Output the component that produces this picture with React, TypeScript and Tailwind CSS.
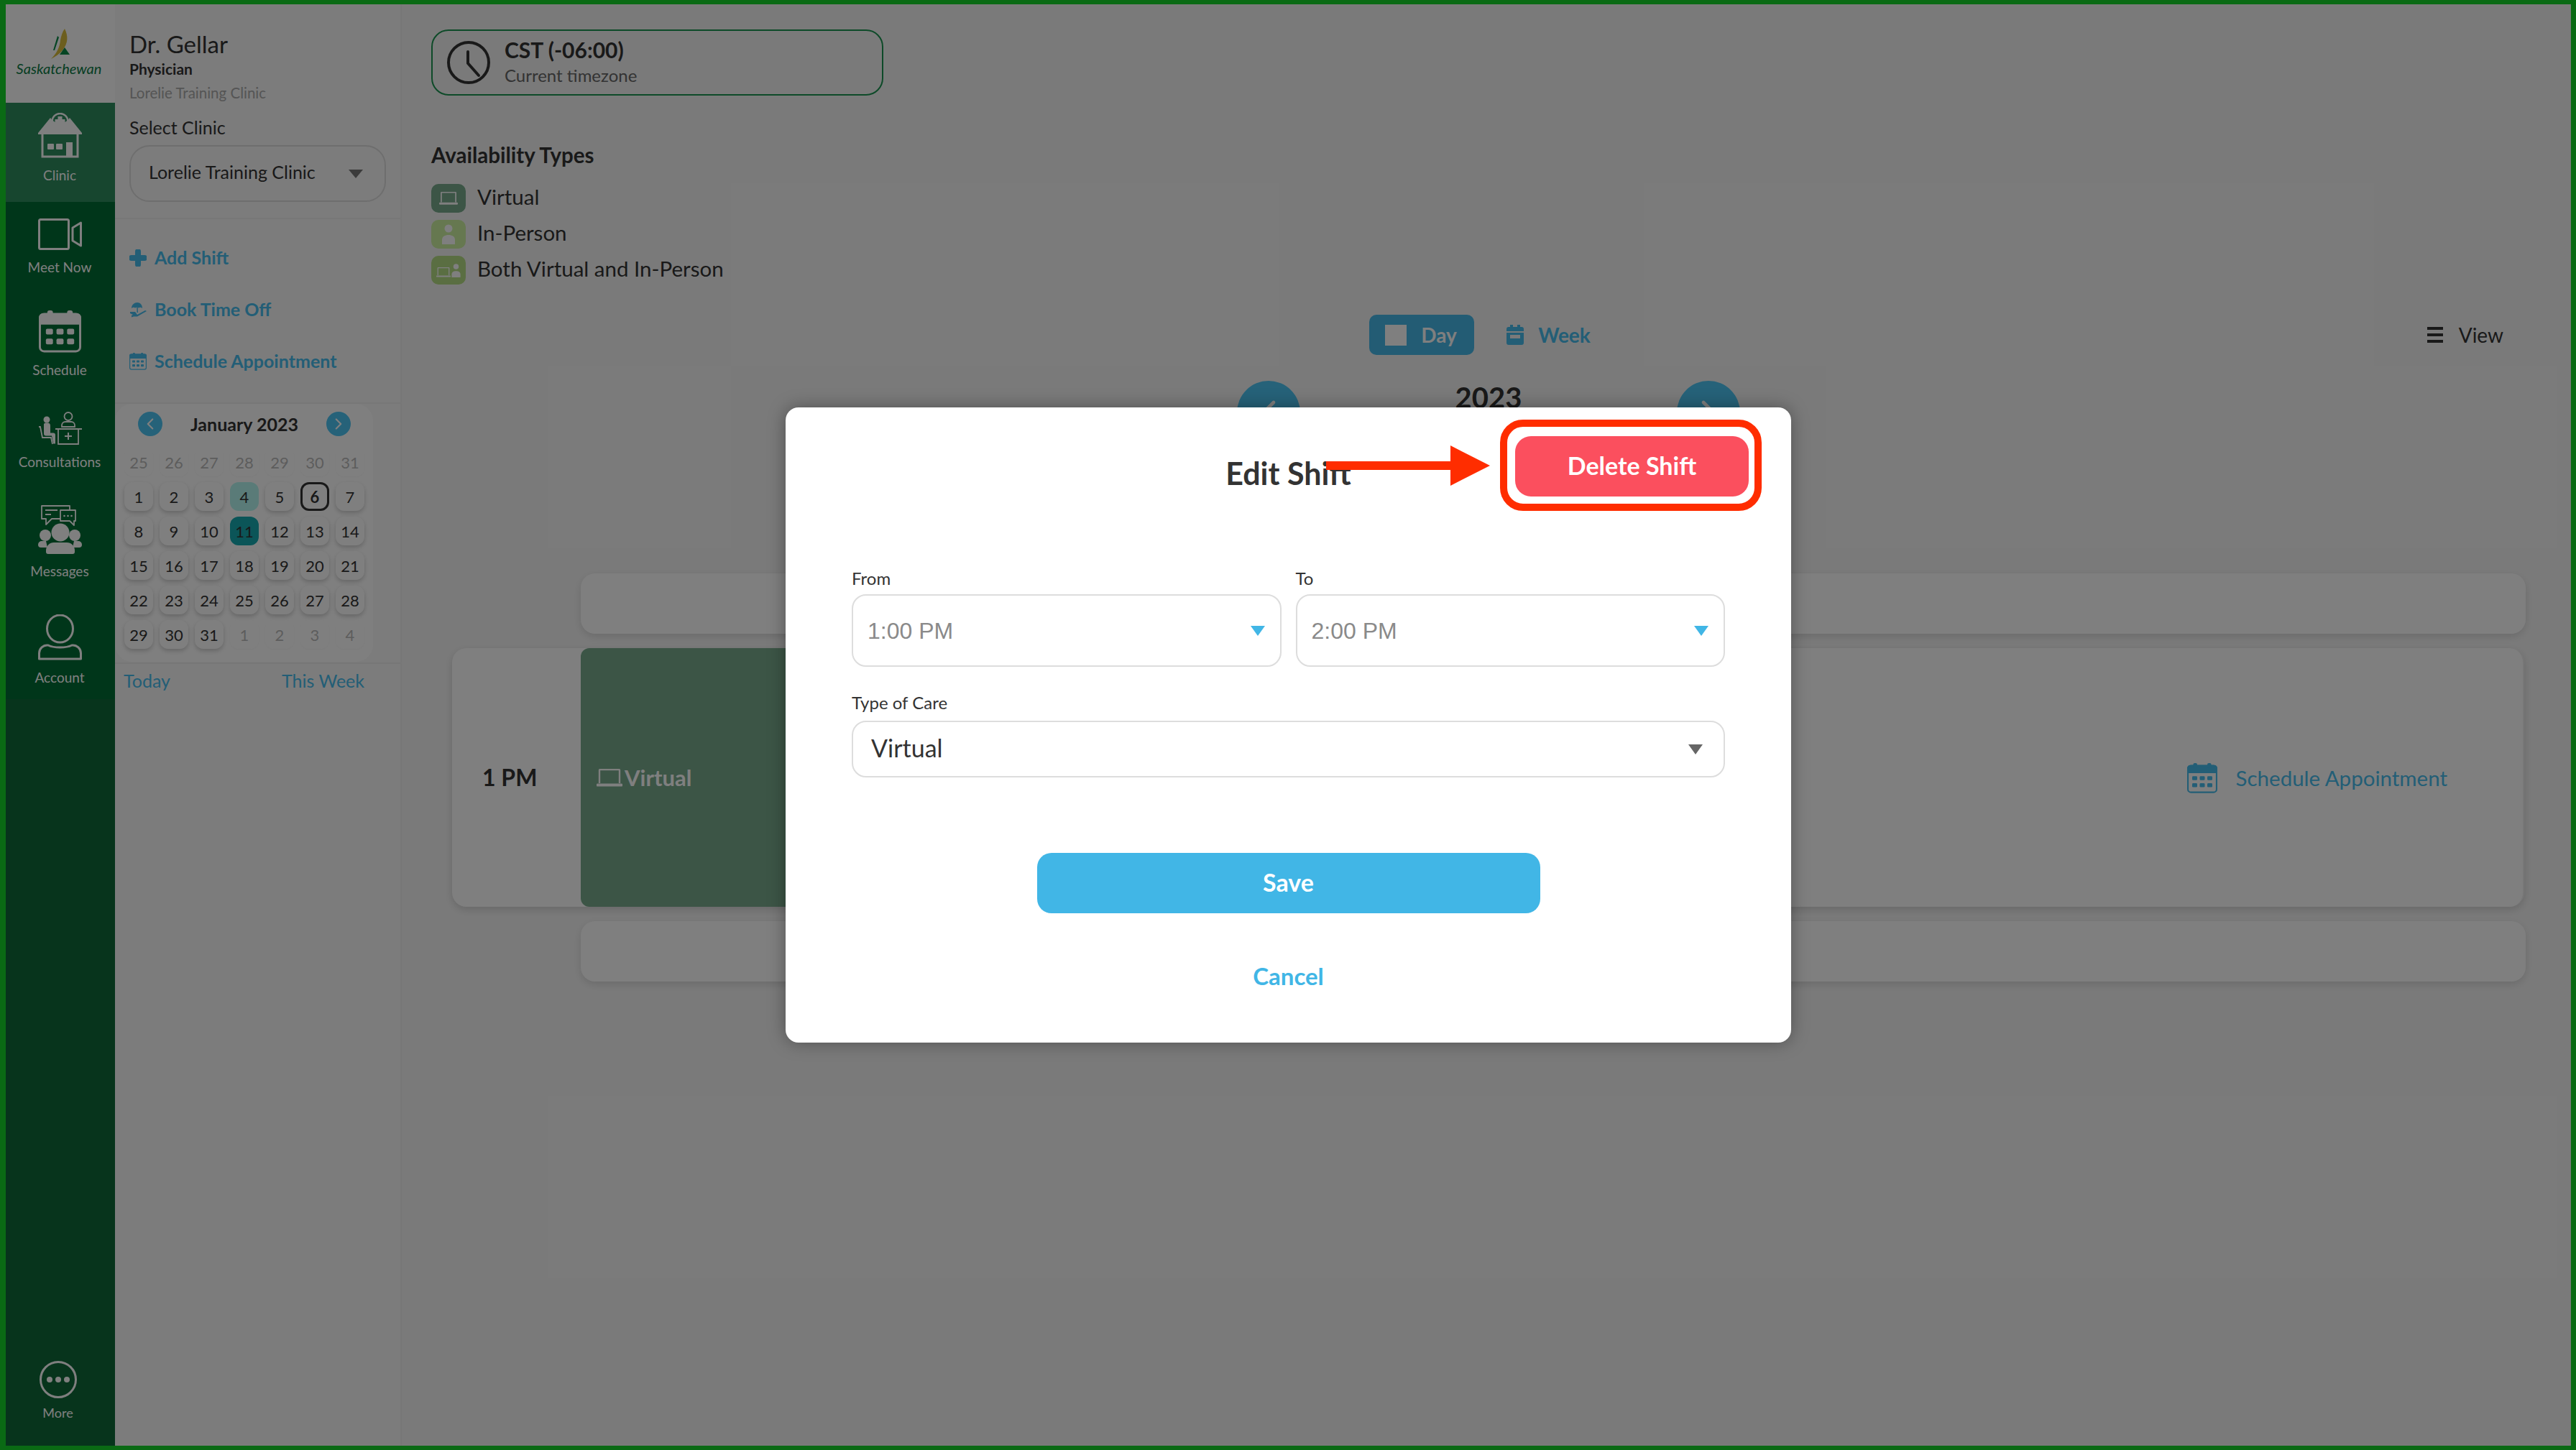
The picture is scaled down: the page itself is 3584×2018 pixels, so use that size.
import { ChevronLeft, ChevronRight } from 'lucide-react';

const ClinicIcon = () => (
  <svg width="61" height="63" viewBox="0 0 61 63" className="text-white">
    <path d="M17 7 L0 28 V30 H61 V28 L44 7 A16 16 0 0 1 17 7 Z" fill="currentColor" />
    <circle cx="30.5" cy="12" r="11" fill="none" stroke="currentColor" strokeWidth="2.5" />
    <path d="M27.5 5 h6 v4 h4 v6 h-4 v4 h-6 v-4 h-4 v-6 h4 Z" fill="currentColor" />
    <path d="M6 28 V61 H55 V28" fill="none" stroke="currentColor" strokeWidth="3" />
    <rect x="13" y="43" width="9" height="8" rx="1" fill="currentColor" />
    <rect x="25" y="43" width="9" height="8" rx="1" fill="currentColor" />
    <rect x="39" y="41" width="9" height="20" fill="currentColor" />
  </svg>
);

const VideoIcon = () => (
  <svg width="61" height="44" viewBox="0 0 61 44" fill="none" stroke="currentColor" strokeWidth="3" className="text-white">
    <rect x="1.5" y="1.5" width="41" height="41" rx="2" />
    <path d="M59.5 6 V38 L48 31 V13 Z" strokeLinejoin="round" />
  </svg>
);

const CalendarIcon = ({ size, strokeWidth = 3 }: { size: number; strokeWidth?: number }) => (
  <svg width={size} height={size} viewBox="0 0 60 60" fill="none">
    <rect x={strokeWidth / 2} y="5" width={60 - strokeWidth} height={53} rx="6" stroke="currentColor" strokeWidth={strokeWidth} />
    <path d="M0 20 V10 a6 6 0 0 1 6 -6 H54 a6 6 0 0 1 6 6 V20 Z" fill="currentColor" />
    <rect x="12" y="0" width="8" height="10" rx="3" fill="currentColor" />
    <rect x="40" y="0" width="8" height="10" rx="3" fill="currentColor" />
    {[10, 25, 40].map((x) => (
      <g key={x} fill="currentColor">
        <rect x={x} y="26" width="10" height="8" rx="2" />
        <rect x={x} y="40" width="10" height="8" rx="2" />
      </g>
    ))}
  </svg>
);

const ConsultIcon = () => (
  <svg width="61" height="46" viewBox="0 0 61 46" fill="none" stroke="currentColor" strokeWidth="1.8" className="text-white">
    <circle cx="42" cy="6.5" r="5.5" />
    <path d="M33 21 v-2 a5 5 0 0 1 5 -5 h8 a5 5 0 0 1 5 5 v2 Z" />
    <path d="M24 24 H61 M28 24 V45 H56 V24" />
    <path d="M42 29 v10 M37 34 h10" strokeWidth="2" />
    <circle cx="12" cy="11" r="4.5" fill="currentColor" stroke="none" />
    <path d="M8 17 a3 3 0 0 1 3 -1.5 h2 a4 4 0 0 1 4 4 v10 h4 a3 3 0 0 1 3 3 v12 h-3 l-2 -11 H11 a3 3 0 0 1 -3 -3 Z" fill="currentColor" stroke="none" />
    <path d="M1 21 H3 L6 36 H18 L20 45" />
  </svg>
);

const MessagesIcon = () => (
  <svg width="61" height="68" viewBox="0 0 61 68" fill="none" stroke="currentColor" strokeWidth="1.8" className="text-white">
    <path d="M31 19 H19 L11 27 V19 H5 V1 H44 V7" strokeLinejoin="round" />
    <path d="M10 7 H27 M10 13 H18" />
    <path d="M31 7 H52 V22 H50 V28 L44 22 H31 Z" strokeLinejoin="round" />
    <g fill="currentColor" stroke="none">
      <circle cx="36.5" cy="15" r="1.3" />
      <circle cx="41.5" cy="15" r="1.3" />
      <circle cx="46.5" cy="15" r="1.3" />
      <circle cx="31" cy="38" r="12.5" />
      <circle cx="10" cy="42" r="8" />
      <circle cx="51" cy="42" r="8" />
      <path d="M0 55 a5 5 0 0 1 5 -5 h6 l2 9 H4 a4 4 0 0 1 -4 -4 Z" />
      <path d="M61 55 a5 5 0 0 0 -5 -5 h-6 l-2 9 H57 a4 4 0 0 0 4 -4 Z" />
      <path d="M11 65 V63 a11 11 0 0 1 11 -11 h18 a11 11 0 0 1 11 11 v2 a3 3 0 0 1 -3 3 H14 a3 3 0 0 1 -3 -3 Z" />
    </g>
  </svg>
);

const AccountIcon = () => (
  <svg width="61" height="64" viewBox="0 0 61 64" fill="none" stroke="currentColor" strokeWidth="3" className="text-white">
    <ellipse cx="30.5" cy="20" rx="18" ry="19" />
    <path d="M14 43 C22 47 39 47 47 43 C54 42 59.5 48 59.5 54 V62 H1.5 V54 C1.5 48 7 42 14 43 Z" strokeLinejoin="round" />
  </svg>
);

const MoreIcon = () => (
  <svg width="52" height="52" viewBox="0 0 52 52" className="text-white">
    <circle cx="26" cy="26" r="24.5" fill="none" stroke="currentColor" strokeWidth="3" />
    <circle cx="14" cy="26" r="4" fill="currentColor" />
    <circle cx="26" cy="26" r="4" fill="currentColor" />
    <circle cx="38" cy="26" r="4" fill="currentColor" />
  </svg>
);

const LogoMark = () => (
  <svg width="27" height="42" viewBox="0 0 27 42">
    <path d="M19 0 C24 10 24 20 16 30 C12 35 6 39 0 42 C8 34 12 26 13 16 C14 10 16 4 19 0 Z" fill="#d9bd3c" />
    <path d="M9 10 L11 12 L5 30 L3 30 Z" fill="#0a8a46" />
    <path d="M19 26 L26 36 H12 Z" fill="#0a8a46" />
  </svg>
);

const Laptop = ({ w }: { w: number }) => (
  <svg width={w} height={(w * 25) / 36} viewBox="0 0 36 25" fill="none" stroke="currentColor">
    <path d="M4 20 V2 a1 1 0 0 1 1 -1 H31 a1 1 0 0 1 1 1 V20" strokeWidth="2.4" />
    <path d="M1.5 22.5 H34.5" strokeWidth="4" strokeLinecap="round" />
  </svg>
);

const Person = () => (
  <svg width="18" height="28" viewBox="0 0 18 28" fill="#fff">
    <circle cx="9" cy="6" r="5.5" />
    <path d="M0 28 V22 C0 17 4 15 9 15 C14 15 18 17 18 22 V28 Z" />
  </svg>
);

const BeachIcon = () => (
  <svg width="24" height="22" viewBox="0 0 24 22" fill="currentColor">
    <path d="M3 9 C3 4 7 1 11 1 C15 1 18 4 18 9 C16 7.5 14.5 7.5 13 8.5 C11.5 7.5 9.5 7.5 8 8.5 C6.5 7.5 5 7.5 3 9 Z" />
    <path d="M10.3 8 L11.7 8 L12 15 L10.5 15 Z" />
    <path d="M1 14 H8 L11 18 L22 12 L24 13 L11 20.5 L6 20.5 L3 21.5 L3 19 L5 18 L1 16 Z" />
  </svg>
);

const NavItem = ({ icon, label, className }: { icon: React.ReactNode; label: string; className: string }) => (
  <div className={`flex flex-col items-center w-full pr-[2px] ${className}`}>
    {icon}
    <span className="text-[19px] leading-[24px] text-white mt-[12px] whitespace-nowrap">{label}</span>
  </div>
);

const Sidebar = () => (
  <div className="w-[152px] h-full flex flex-col shrink-0 bg-[#006c35]">
    <div className="h-[137px] bg-white flex flex-col items-center pt-[34px] shrink-0">
      <LogoMark />
      <span className="text-[20px] leading-[26px] italic text-[#0b7a45] -ml-[4px]">Saskatchewan</span>
    </div>
    <NavItem icon={<ClinicIcon />} label="Clinic" className="h-[138px] bg-[#2e8c5e] pt-[14px] shrink-0" />
    <NavItem icon={<VideoIcon />} label="Meet Now" className="h-[151px] pt-[23px] shrink-0" />
    <NavItem icon={<span className="text-white"><CalendarIcon size={59} /></span>} label="Schedule" className="h-[141px] shrink-0" />
    <NavItem icon={<ConsultIcon />} label="Consultations" className="h-[130px] shrink-0" />
    <NavItem icon={<MessagesIcon />} label="Messages" className="h-[152px] shrink-0" />
    <NavItem icon={<AccountIcon />} label="Account" className="h-[118px] shrink-0" />
    <div className="flex-1 bg-[#0e6839] flex flex-col items-center justify-end pb-[35px] pr-[7px]">
      <MoreIcon />
      <span className="text-[18px] leading-[22px] text-white mt-[9px]">More</span>
    </div>
  </div>
);

const prevDays = [25, 26, 27, 28, 29, 30, 31];
const days = Array.from({ length: 31 }, (_, i) => i + 1);
const nextDays = [1, 2, 3, 4];

const MiniCalendar = () => (
  <div className="w-[359px] h-[359px] bg-white rounded-[24px] pt-[11px] pl-[13px] shrink-0">
    <div className="flex items-center justify-between w-[296px] ml-[19px]">
      <div className="w-[34px] h-[34px] rounded-full bg-[#4cc4f2] flex items-center justify-center text-white"><ChevronLeft size={26} /></div>
      <span className="text-[25px] leading-[30px] font-bold text-[#333]">January 2023</span>
      <div className="w-[34px] h-[34px] rounded-full bg-[#4cc4f2] flex items-center justify-center text-white"><ChevronRight size={26} /></div>
    </div>
    <div className="grid grid-cols-[repeat(7,40px)] auto-rows-[40px] gap-x-[9px] gap-y-[8px] mt-[16px] text-[22px] text-[#333]">
      {prevDays.map((d) => (
        <div key={`p${d}`} className="flex items-center justify-center rounded-[12px] text-[#bbb] shadow-[0_1px_3px_rgba(0,0,0,0.04)]">{d}</div>
      ))}
      {days.map((d) => (
        <div
          key={d}
          className={`flex items-center justify-center rounded-[12px] ${
            d === 4
              ? 'bg-[#b4f6f0]'
              : d === 11
                ? 'bg-[#16aab0]'
                : d === 6
                  ? 'bg-white border-[3px] border-[#333] font-bold'
                  : 'bg-white shadow-[0_3px_6px_rgba(0,0,0,0.2)]'
          }`}
        >
          {d}
        </div>
      ))}
      {nextDays.map((d) => (
        <div key={`n${d}`} className="flex items-center justify-center rounded-[12px] text-[#bbb] shadow-[0_1px_3px_rgba(0,0,0,0.04)]">{d}</div>
      ))}
    </div>
  </div>
);

const LeftPanel = () => (
  <div className="w-[399px] h-full shrink-0 bg-[#f8f8f8] border-r-2 border-[#eeeeee] flex flex-col">
    <div className="pt-[35px] pl-[20px] pb-[22px] border-b-2 border-[#eeeeee] text-[#333]">
      <div className="text-[33px] leading-[40px]">Dr. Gellar</div>
      <div className="text-[21px] leading-[24px] font-bold mt-[3px]">Physician</div>
      <div className="text-[20.5px] leading-[24px] text-[#aaa] mt-[9px]">Lorelie Training Clinic</div>
      <div className="text-[25px] leading-[30px] pt-[21px] pb-[1px]">Select Clinic</div>
      <div className="w-[357px] h-[79px] mt-[9px] rounded-[28px] border-2 border-[#ddd] flex items-center justify-between pl-[25px] pr-[30px]">
        <span className="text-[25px] -mt-[3px]">Lorelie Training Clinic</span>
        <svg width="20" height="12" viewBox="0 0 20 12"><path d="M0 0 H20 L10 12 Z" fill="#777" /></svg>
      </div>
    </div>
    <div className="pt-[39px] pb-[42px] pl-[20px] border-b-2 border-[#eeeeee] flex flex-col gap-[42px] text-[#46bcec] text-[25px] font-bold">
      <div className="flex items-center gap-[11px] h-[30px]">
        <svg width="24" height="24" viewBox="0 0 24 24" fill="currentColor"><path d="M8 3 a4 4 0 0 1 8 0 V8 H21 a4 4 0 0 1 0 8 H16 V21 a4 4 0 0 1 -8 0 V16 H3 a4 4 0 0 1 0 -8 H8 Z" /></svg>
        Add Shift
      </div>
      <div className="flex items-center gap-[11px] h-[30px]"><BeachIcon />Book Time Off</div>
      <div className="flex items-center gap-[11px] h-[30px]"><CalendarIcon size={24} strokeWidth={3} />Schedule Appointment</div>
    </div>
    <MiniCalendar />
    <div className="border-t-2 border-[#eeeeee] mt-[1px] pt-[8px] pl-[12px] pr-[50px] flex justify-between text-[25px] leading-[30px] text-[#46bcec]">
      <span>Today</span>
      <span>This Week</span>
    </div>
  </div>
);

const legend = [
  { label: 'Virtual', color: 'bg-[#78aa8c]', icon: <span className="text-white"><Laptop w={26} /></span> },
  { label: 'In-Person', color: 'bg-[#ccf0a0]', icon: <Person /> },
  {
    label: 'Both Virtual and In-Person',
    color: 'bg-[#b4dc84]',
    icon: (
      <span className="flex items-end gap-[1px] text-white">
        <Laptop w={20} />
        <svg width="13" height="19" viewBox="0 0 18 28" fill="#fff"><circle cx="9" cy="6" r="5.5" /><path d="M0 28 V22 C0 17 4 15 9 15 C14 15 18 17 18 22 V28 Z" /></svg>
      </span>
    ),
  },
];

const MainPanel = () => (
  <div className="flex-1 h-full pt-[35px] pl-[41px] pr-[63px] flex flex-col min-w-0">
    <div className="w-[629px] h-[92px] rounded-[24px] border-2 border-[#1a9450] flex items-center pl-[20px] shrink-0">
      <svg width="60" height="60" viewBox="0 0 60 60" fill="none" stroke="#333" strokeWidth="4" strokeLinecap="round">
        <circle cx="30" cy="30" r="28" />
        <path d="M29 15 V31 L44 48" />
      </svg>
      <div className="ml-[20px] -mt-[2px] text-[#333]">
        <div className="text-[30px] leading-[34px] font-bold">CST (-06:00)</div>
        <div className="text-[24px] leading-[30px] text-[#666] mt-[4px]">Current timezone</div>
      </div>
    </div>

    <div className="text-[29.5px] leading-[36px] font-bold text-[#333] mt-[65px] pb-[1px]">Availability Types</div>
    <div className="flex flex-col gap-[10px] mt-[21px]">
      {legend.map((item) => (
        <div key={item.label} className="flex items-center gap-[16px] h-[40px] text-[29.5px] text-[#333]">
          <div className={`w-[48px] h-[40px] rounded-[10px] flex items-center justify-center ${item.color}`}>{item.icon}</div>
          <span className="-mt-[3px]">{item.label}</span>
        </div>
      ))}
    </div>

    {/* Day / Week toggle */}
    <div className="grid grid-cols-[1fr_auto_1fr] items-center h-[56px] mt-[42px] pl-[6px] shrink-0">
      <div />
      <div className="flex items-center text-[28px] text-[#46bcec] -ml-[2px]">
        <div className="w-[146px] h-[56px] rounded-[10px] bg-[#46b8e8] flex items-center pl-[22px] gap-[20px] text-white font-bold">
          <div className="w-[30px] h-[29px] bg-white" />
          Day
        </div>
        <div className="flex items-center ml-[45px] gap-[20px] font-bold">
          <svg width="24" height="28" viewBox="0 0 24 28" fill="currentColor">
            <path d="M5 0 h4 v3 h6 v-3 h4 v3 h2 a3 3 0 0 1 3 3 v19 a3 3 0 0 1 -3 3 H3 a3 3 0 0 1 -3 -3 V6 a3 3 0 0 1 3 -3 h2 Z M0 9 v2 h24 v-2 Z M5 14 v5 h14 v-5 Z" fillRule="evenodd" />
          </svg>
          Week
        </div>
      </div>
      <div className="flex justify-end items-center pr-[31px] gap-[20px] text-[28px] text-[#333]">
        <svg width="26" height="24" viewBox="0 0 26 24" fill="currentColor">
          <rect x="2" y="1" width="22" height="4" />
          <rect x="2" y="10" width="22" height="4" />
          <rect x="2" y="19" width="22" height="4" />
        </svg>
        View
      </div>
    </div>

    <div className="w-[700px] ml-[1121px] mt-[36px] flex items-center justify-between h-[88px] shrink-0">
      <div className="w-[88px] h-[88px] rounded-full bg-[#4cc4f2] flex items-center justify-center text-white"><ChevronLeft size={56} /></div>
      <span className="text-[40px] leading-[46px] font-bold text-[#333] self-start">2023</span>
      <div className="w-[88px] h-[88px] rounded-full bg-[#4cc4f2] flex items-center justify-center text-white"><ChevronRight size={56} /></div>
    </div>

    <div className="h-[84px] ml-[208px] mt-[180px] bg-white rounded-[20px] shadow-[0_4px_12px_rgba(0,0,0,0.12)] shrink-0" />

    <div className="h-[360px] ml-[29px] mr-[2px] mt-[20px] bg-white rounded-[20px] shadow-[0_4px_12px_rgba(0,0,0,0.15)] flex items-center shrink-0 border-r-2 border-[#eee]">
      <div className="w-[179px] pl-[42px] text-[32px] font-bold text-[#333]">1 PM</div>
      <div className="w-[620px] h-full bg-[#78aa8c] rounded-[12px] flex items-center pl-[22px] gap-[3px] text-white text-[31px] font-bold">
        <Laptop w={36} />
        Virtual
      </div>
      <div className="ml-auto mr-[105px] mt-[2px] flex items-center gap-[26px] text-[#46bcec] text-[29.5px]">
        <CalendarIcon size={42} />
        Schedule Appointment
      </div>
    </div>

    <div className="h-[84px] ml-[208px] mt-[20px] bg-white rounded-[20px] shadow-[0_4px_12px_rgba(0,0,0,0.12)] shrink-0" />
  </div>
);

const SelectCaret = ({ color }: { color: string }) => (
  <svg width="22" height="14" viewBox="0 0 22 14"><path d="M1 0 H21 L11 14 Z" fill={color} /></svg>
);

const EditShiftModal = () => (
  <div className="relative w-[1399px] h-[884px] bg-white rounded-[18px] shadow-[0_0_24px_rgba(0,0,0,0.35)] flex flex-col pt-[68px] px-[92px]">
    <h2 className="text-[43px] leading-[48px] font-bold text-[#333] text-center">Edit Shift</h2>

    {/* delete button + the red callout drawn over the screenshot */}
    <button className="absolute left-[1015px] top-[40px] w-[325px] h-[84px] pb-[3px] rounded-[22px] bg-[#fb4f5e] text-white text-[34px] font-bold">
      Delete Shift
    </button>
    <div className="absolute left-[994px] top-[17px] w-[364px] h-[127px] rounded-[32px] border-[10px] border-[#ff2d00]" />
    <svg className="absolute left-[752px] top-[53px]" width="228" height="56" viewBox="0 0 228 56">
      <path d="M0 22 H173 V0 L228 28 L173 56 V34 H0 Z" fill="#ff2d00" />
    </svg>

    <div className="grid grid-cols-2 gap-x-[20px] mt-[108px]">
      {['1:00 PM', '2:00 PM'].map((time, i) => (
        <div key={time}>
          <label className="block text-[24px] leading-[28px] text-[#333]">{i === 0 ? 'From' : 'To'}</label>
          <div className="h-[101px] mt-[8px] rounded-[20px] border-2 border-[#ddd] flex items-center justify-between pl-[20px] pr-[20px]">
            <span className="font-['Liberation_Sans',sans-serif] text-[32px] text-[#8a8a8a]">{time}</span>
            <SelectCaret color="#41b6e6" />
          </div>
        </div>
      ))}
    </div>

    <label className="block text-[24px] leading-[28px] text-[#333] mt-[36px]">Type of Care</label>
    <div className="h-[79px] mt-[11px] rounded-[20px] border-2 border-[#ddd] flex items-center justify-between pl-[25px] pr-[28px]">
      <span className="text-[34px] text-[#333] -mt-[5px]">Virtual</span>
      <SelectCaret color="#666" />
    </div>

    <button className="w-[700px] h-[84px] pb-[3px] self-center mt-[105px] rounded-[20px] bg-[#41b6e6] text-white text-[34px] font-bold">
      Save
    </button>
    <button className="self-center mt-[67px] text-[33px] leading-[40px] font-bold text-[#41b6e6]">Cancel</button>
  </div>
);

export default function App() {
  return (
    <div className="w-[3584px] h-[2018px] bg-[#0a6a14] pt-[6px] pb-[6px] pl-[8px] pr-[7px] font-['Lato',sans-serif] overflow-hidden">
      <div className="relative w-full h-full flex bg-[#f5f5f5] overflow-hidden">
        <Sidebar />
        <LeftPanel />
        <MainPanel />
        <div className="absolute inset-0 bg-black/50 flex items-center justify-center">
          <EditShiftModal />
        </div>
      </div>
    </div>
  );
}
